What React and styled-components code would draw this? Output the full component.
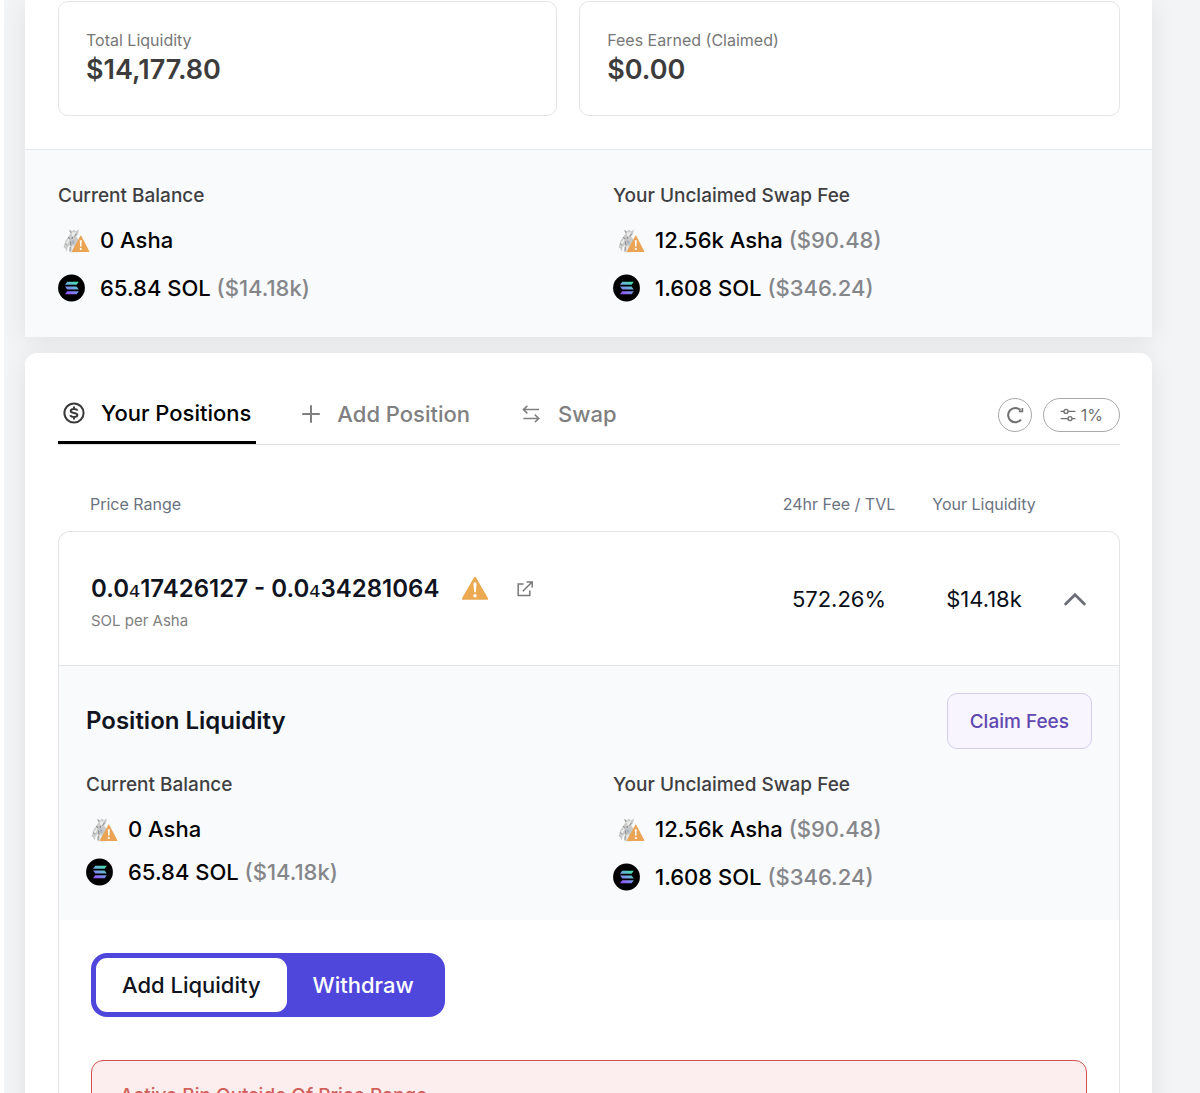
import React from 'react'
import styled, { createGlobalStyle } from 'styled-components'

const GlobalStyle = createGlobalStyle`
* {
  box-sizing: border-box;
}
body {
  margin: 0;
  background: #f3f4f6;
  color: #000;
  font-family: Inter, "Liberation Sans", sans-serif;
}
h2, h3, p {
  margin: 0;
}
button {
  font-family: inherit;
  cursor: pointer;
}
`

const Page = styled.main`
  min-height: 100vh;
  padding: 0 48px 0 21px;
  border-left: 4px solid #fff;
`

const Card = styled.section`
  background: #fff;
  box-shadow: 0 4px 24px rgba(0, 0, 0, 0.08);
`

const SummaryCard = styled(Card)`
  margin-bottom: 16px;
`

const PositionsCard = styled(Card)`
  padding: 32px 32px 48px 33px;
  border-radius: 12px 12px 0 0;
`

const StatGrid = styled.div`
  display: grid;
  grid-template-columns: 12fr 13fr;
  gap: 22px;
  padding: 1px 32px 33px 33px;
`

const StatBox = styled.div`
  padding: 26px 27px 27px;
  border: 1px solid #e4e4e7;
  border-radius: 10px;
`

const StatLabel = styled.p`
  font-size: 16px;
  line-height: 24px;
  color: #777;
`

const StatValue = styled.p`
  font-size: 27px;
  line-height: 36px;
  font-weight: 600;
  color: #3c3c3c;
`

const SummaryBalances = styled.div`
  padding: 32px 32px 35px 33px;
  border-top: 1px solid #e5e7eb;
  background: #f9fafc;
`

const BalanceGrid = styled.div`
  display: grid;
  grid-template-columns: 1fr 1fr;
  gap: 48px;
`

const BalanceTitle = styled.h3`
  margin-bottom: 16px;
  font-size: 19px;
  line-height: 28px;
  font-weight: 500;
  color: #3f3f42;
`

const BalanceList = styled.div`
  display: flex;
  flex-direction: column;
  gap: ${(props) => (props.$tight ? '15px' : '20px')};
`

const BalanceRow = styled.div`
  display: flex;
  align-items: center;
  gap: 10px;
  font-size: 22px;
  line-height: 28px;
  font-weight: 500;
`

const TokenSlot = styled.span`
  display: flex;
  width: 32px;
  height: 28px;
`

const Muted = styled.span`
  color: #85868a;
`

const TabBar = styled.div`
  display: flex;
  justify-content: space-between;
  align-items: center;
  height: 60px;
  margin-bottom: 46px;
  border-bottom: 1px solid #e1e1e3;
`

const Tabs = styled.nav`
  display: flex;
  gap: 40px;
`

const Tab = styled.button`
  display: flex;
  align-items: center;
  gap: 16px;
  height: 59px;
  padding: 0 5px;
  border: 0;
  border-bottom: ${(props) => (props.$active ? '3px solid #000' : '1px solid transparent')};
  background: none;
  color: ${(props) => (props.$active ? '#000' : '#808080')};
  font-size: 22px;
  line-height: 28px;
  font-weight: 500;
`

const Tools = styled.div`
  display: flex;
  gap: 11px;
`

const ToolButton = styled.button`
  display: flex;
  align-items: center;
  justify-content: center;
  gap: 5px;
  min-width: 34px;
  height: 34px;
  padding: 0 ${(props) => (props.$wide ? '16px' : '0')};
  border: 1px solid #a9a9a9;
  border-radius: 17px;
  background: #fff;
  color: #707070;
  font-size: 16px;
`

const PositionTable = styled.table`
  width: 100%;
  table-layout: fixed;
  border-collapse: separate;
  border-spacing: 0;
`

const HeadCell = styled.th`
  width: ${(props) => props.$width || 'auto'};
  padding: 0 0 13px ${(props) => (props.$first ? '32px' : '0')};
  text-align: ${(props) => (props.$first ? 'left' : 'center')};
  font-size: 16px;
  line-height: 27px;
  font-weight: 400;
  color: #6b7280;
  white-space: nowrap;
`

const Cell = styled.td`
  height: 135px;
  padding: 0;
  border-top: 1px solid #e4e4e7;
  border-bottom: 1px solid #e4e4e7;
  text-align: center;
  font-size: 22px;
  line-height: 28px;
  color: #0b0f19;

  &:first-child {
    padding-left: 32px;
    border-left: 1px solid #e4e4e7;
    border-top-left-radius: 12px;
    text-align: left;
  }

  &:last-child {
    padding-right: 6px;
    border-right: 1px solid #e4e4e7;
    border-top-right-radius: 12px;
  }
`

const RangeLine = styled.div`
  display: flex;
  align-items: center;
  font-size: 24px;
  line-height: 44px;
  font-weight: 600;
  color: #0f1420;
`

const ZeroCount = styled.span`
  font-family: "DejaVu Sans", sans-serif;
  font-size: 28px;
  font-weight: 400;
  line-height: 1;
`

const RangeUnit = styled.p`
  font-size: 15px;
  line-height: 20px;
  color: #808080;
`

const WarningSlot = styled.span`
  display: flex;
  margin: 0 27px 0 22px;
`

const IconLink = styled.a`
  display: flex;
  color: #777;
`

const IconButton = styled.button`
  padding: 4px;
  border: 0;
  background: none;
  color: #6b6e75;
  vertical-align: middle;

  svg {
    display: block;
  }
`

const DetailCell = styled.td`
  padding: 0;
  border-left: 1px solid #e4e4e7;
  border-right: 1px solid #e4e4e7;
`

const LiquidityPanel = styled.div`
  padding: 27px 27px 29px;
  background: #f9fafc;
`

const PanelHead = styled.div`
  display: flex;
  justify-content: space-between;
  align-items: center;
  margin-bottom: 22px;
`

const PanelTitle = styled.h2`
  font-size: 24px;
  line-height: 32px;
  font-weight: 600;
  color: #0f1420;
`

const ClaimButton = styled.button`
  height: 56px;
  padding: 0 22px;
  border: 1px solid #d6cdec;
  border-radius: 10px;
  background: #f8f5fe;
  color: #5f48b0;
  font-size: 19px;
  font-weight: 500;
`

const ActionPanel = styled.div`
  padding: 33px 32px 32px;
`

const Toggle = styled.div`
  display: inline-flex;
  height: 64px;
  margin-bottom: 43px;
  padding: 5px;
  border-radius: 16px;
  background: #4f46dc;
  vertical-align: top;
`

const ToggleButton = styled.button`
  padding: 0 26px;
  border: 0;
  border-radius: 11px;
  background: ${(props) => (props.$active ? '#fff' : 'transparent')};
  color: ${(props) => (props.$active ? '#0f1420' : '#fff')};
  font-size: 22px;
  font-weight: 500;
`

const Alert = styled.div`
  padding: 21px 28px 24px;
  border: 1px solid #d0524e;
  border-radius: 12px;
  background: #fceeee;
  color: #d0605a;
  font-size: 19px;
  line-height: 28px;
  font-weight: 500;
`

function WarningIcon() {
  return (
    <svg width="28" height="27" viewBox="1.5 2.5 25 24" aria-hidden="true">
      <path d="M14.8 4.4 25.6 23.2a.9.9 0 0 1-.8 1.4H3.2a.9.9 0 0 1-.8-1.4L13.2 4.4a.9.9 0 0 1 1.6 0z" fill="#eba951" />
      <path d="M12.6 10.4a1.4 1.4 0 0 1 2.8 0l-.7 7.4h-1.4z" fill="#fff" />
      <circle cx="14" cy="21" r="1.5" fill="#fff" />
    </svg>
  )
}

function AshaIcon() {
  return (
    <svg width="32" height="28" viewBox="0 0 32 28" aria-hidden="true">
      <path d="M11.5 3.4 14 5.6l2-2 1.7 2 3.5-2.2-1.4 4.8-1.6 2.3 2 3-1 4.6.4 8.2h-7.4l.3-7.6-2.9 2.4-.8 4.6-1.6-3.4-1.6-.8 1.8-6.6 3.6-5.2 1.6-2.2z" fill="#c9cac9" />
      <path d="M13.5 6.6 17.8 6l-1 4.2-2.3.6zM8 16.4l3-3.6.3 2.8-3 3.4zM13.6 20.2l2.2-.8-.5 6.6h-1.8z" fill="#ececea" />
      <path d="m11.7 4.6 1.4 2.2m-3 4.4 2.2 1.6m4-2.2 2.2-2.8M12.4 15.4l.6 4.2M7.2 17.6l1.6 1.2m3.4 1.8-.3 4.8m2.6-14.6-.4 2.2" stroke="#858786" strokeWidth="1" fill="none" />
      <path d="M13.4 14.4h3v3.4h-2.6z" fill="#a9b2be" />
      <path d="M23.2 9.8 31.2 25a.6.6 0 0 1-.5.9H14.5a.6.6 0 0 1-.5-.9l8.4-15.2a.5.5 0 0 1 .8 0z" fill="#eba454" />
      <path d="M21.8 14.2h2l-.4 6.6h-1.2z" fill="#fff" />
      <circle cx="22.8" cy="23" r="1.1" fill="#fff" />
    </svg>
  )
}

function SolIcon() {
  return (
    <svg width="28" height="28" viewBox="0 0 28 28" aria-hidden="true">
      <defs>
        <linearGradient id="solFill" x1="19" y1="7" x2="11" y2="21" gradientUnits="userSpaceOnUse">
          <stop offset="0" stopColor="#3fe8a8" />
          <stop offset="0.5" stopColor="#6fa8e0" />
          <stop offset="1" stopColor="#9450ff" />
        </linearGradient>
      </defs>
      <circle cx="13.5" cy="14" r="13.4" fill="#000" />
      <path d="M9.2 7.8h11.6l-2.2 3H7zM7 12.5h11.6l2.2 3H9.2zM9.2 17.2h11.6l-2.2 3H7z" fill="url(#solFill)" />
    </svg>
  )
}

function DollarIcon() {
  return (
    <svg width="22" height="22" viewBox="0 0 22 22" fill="none" stroke="#3a3a3a" strokeWidth="2" aria-hidden="true">
      <circle cx="11" cy="11" r="9.6" />
      <path d="M14.4 8.7c-.2-1.2-1.4-1.8-3.4-1.8s-3.3.6-3.3 2c0 3 6.7 1.2 6.7 4.2 0 1.4-1.4 2-3.4 2s-3.4-.7-3.6-1.9M11 4.4v2.4m0 8.4v2.4" />
    </svg>
  )
}

function PlusIcon() {
  return (
    <svg width="20" height="20" viewBox="0 0 20 20" stroke="currentColor" strokeWidth="2" aria-hidden="true">
      <path d="M1.2 10h17.6M10 1.2v17.6" />
    </svg>
  )
}

function SwapIcon() {
  return (
    <svg width="22" height="20" viewBox="-1 0 22 20" fill="none" stroke="currentColor" strokeWidth="1.5" aria-hidden="true">
      <path d="M18 5.6H2.6M6.4 1.8 2.4 5.6l4 3.8M2.4 14.4h15.2M13.8 10.6l4 3.8-4 3.8" />
    </svg>
  )
}

function RefreshIcon() {
  return (
    <svg width="20" height="20" viewBox="0 0 20 20" fill="none" stroke="currentColor" aria-hidden="true">
      <path d="M16 14.6A7.2 7.2 0 1 1 15.4 5" strokeWidth="2" />
      <path d="M17.4 3v3.4h-3.6" strokeWidth="1.6" />
    </svg>
  )
}

function SlidersIcon() {
  return (
    <svg width="16" height="14" viewBox="0 0 16 14" fill="none" stroke="currentColor" strokeWidth="1.4" aria-hidden="true">
      <path d="M.6 3.4H4M8 3.4h7.4M.6 10.6H8M12 10.6h3.4" />
      <circle cx="6" cy="3.4" r="2" />
      <circle cx="10" cy="10.6" r="2" />
    </svg>
  )
}

function ExternalIcon() {
  return (
    <svg width="18" height="18" viewBox="0 0 18 18" fill="none" stroke="currentColor" strokeWidth="1.5" aria-hidden="true">
      <path d="M7.6 4H2.2v11.6h11.6v-5.2M6.8 11.2l9-9M10.6 1.9h5.6v5.6" />
    </svg>
  )
}

function ChevronIcon() {
  return (
    <svg width="24" height="24" viewBox="0 0 24 24" fill="none" stroke="currentColor" strokeWidth="2.8" strokeLinecap="round" aria-hidden="true">
      <path d="m2.6 17 9.4-9.2 9.4 9.2" />
    </svg>
  )
}

const balances = [
  { token: 'Asha', amount: '0 Asha' },
  { token: 'SOL', amount: '65.84 SOL', usd: '($14.18k)' },
]

const fees = [
  { token: 'Asha', amount: '12.56k Asha', usd: '($90.48)' },
  { token: 'SOL', amount: '1.608 SOL', usd: '($346.24)' },
]

function TokenBalances({ title, rows, tight }) {
  return (
    <div>
      <BalanceTitle>{title}</BalanceTitle>
      <BalanceList $tight={tight}>
        {rows.map((row) => (
          <BalanceRow key={row.token}>
            <TokenSlot>{row.token === 'SOL' ? <SolIcon /> : <AshaIcon />}</TokenSlot>
            <span>
              {row.amount} {row.usd && <Muted>{row.usd}</Muted>}
            </span>
          </BalanceRow>
        ))}
      </BalanceList>
    </div>
  )
}

function Summary() {
  return (
    <SummaryCard>
      <StatGrid>
        <StatBox>
          <StatLabel>Total Liquidity</StatLabel>
          <StatValue>$14,177.80</StatValue>
        </StatBox>
        <StatBox>
          <StatLabel>Fees Earned (Claimed)</StatLabel>
          <StatValue>$0.00</StatValue>
        </StatBox>
      </StatGrid>
      <SummaryBalances>
        <BalanceGrid>
          <TokenBalances title="Current Balance" rows={balances} />
          <TokenBalances title="Your Unclaimed Swap Fee" rows={fees} />
        </BalanceGrid>
      </SummaryBalances>
    </SummaryCard>
  )
}

function PositionDetail() {
  return (
    <>
      <LiquidityPanel>
        <PanelHead>
          <PanelTitle>Position Liquidity</PanelTitle>
          <ClaimButton>Claim Fees</ClaimButton>
        </PanelHead>
        <BalanceGrid>
          <TokenBalances title="Current Balance" rows={balances} tight />
          <TokenBalances title="Your Unclaimed Swap Fee" rows={fees} />
        </BalanceGrid>
      </LiquidityPanel>
      <ActionPanel>
        <Toggle>
          <ToggleButton $active>Add Liquidity</ToggleButton>
          <ToggleButton>Withdraw</ToggleButton>
        </Toggle>
        <Alert>Active Bin Outside Of Price Range</Alert>
      </ActionPanel>
    </>
  )
}

function Positions() {
  return (
    <PositionsCard>
      <TabBar>
        <Tabs>
          <Tab $active><DollarIcon />Your Positions</Tab>
          <Tab><PlusIcon />Add Position</Tab>
          <Tab><SwapIcon />Swap</Tab>
        </Tabs>
        <Tools>
          <ToolButton aria-label="Refresh"><RefreshIcon /></ToolButton>
          <ToolButton $wide><SlidersIcon />1%</ToolButton>
        </Tools>
      </TabBar>

      <PositionTable>
        <thead>
          <tr>
            <HeadCell $first>Price Range</HeadCell>
            <HeadCell $width="186px">24hr Fee / TVL</HeadCell>
            <HeadCell $width="104px">Your Liquidity</HeadCell>
            <HeadCell $width="84px" />
          </tr>
        </thead>
        <tbody>
          <tr>
            <Cell>
              <RangeLine>
                <span>
                  0.0<ZeroCount>₄</ZeroCount>17426127 - 0.0<ZeroCount>₄</ZeroCount>34281064
                </span>
                <WarningSlot><WarningIcon /></WarningSlot>
                <IconLink href="#position" aria-label="Open position"><ExternalIcon /></IconLink>
              </RangeLine>
              <RangeUnit>SOL per Asha</RangeUnit>
            </Cell>
            <Cell>572.26%</Cell>
            <Cell>$14.18k</Cell>
            <Cell>
              <IconButton aria-label="Collapse position"><ChevronIcon /></IconButton>
            </Cell>
          </tr>
          <tr>
            <DetailCell colSpan={4}>
              <PositionDetail />
            </DetailCell>
          </tr>
        </tbody>
      </PositionTable>
    </PositionsCard>
  )
}

function App() {
  return (
    <>
      <GlobalStyle />
      <Page>
        <Summary />
        <Positions />
      </Page>
    </>
  )
}

export default App
